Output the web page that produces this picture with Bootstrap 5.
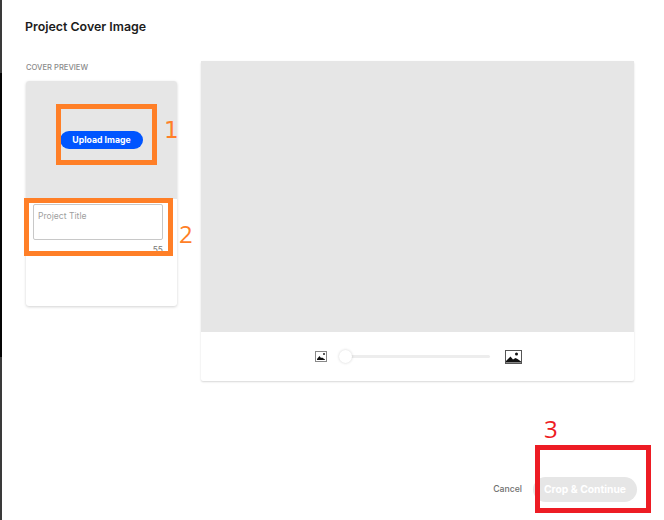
<!DOCTYPE html>
<html><head><meta charset="utf-8">
<link href="https://cdn.jsdelivr.net/npm/bootstrap@5.3.0/dist/css/bootstrap.min.css" rel="stylesheet">
<style>
html,body{height:100%;}
body{font-family:Inter,Roboto,"Liberation Sans",sans-serif;background:#fff;overflow:hidden;}
.stage{position:relative;width:664px;height:520px;}
.edge-strip{width:2px;height:520px;flex:none;background:linear-gradient(#3a3a3a 0,#3a3a3a 73px,#050505 73px,#050505 357px,#3a3a3a 357px,#3a3a3a 100%);}
.dialog-body{padding:19px 30px 0 24px;flex:1;min-width:0;height:520px;display:flex;flex-direction:column;}
.dlg-title{font-size:12.4px;font-weight:600;color:#1c1c1c;line-height:16px;margin:0 0 0 -1px;}
.main-row{margin-top:26px;gap:24px;}
.left-col{width:151px;flex:none;}
.cover-label{font-size:7.6px;font-weight:500;color:#8a8a8a;line-height:10px;margin:2px 0 8px 0;}
.cover-card{height:225px;border-radius:3px;box-shadow:0 1px 3px rgba(0,0,0,.18);background:#fff;overflow:hidden;}
.cover-top{height:118px;background:#e6e6e6;padding-top:50px;}
.upload-pill{display:block;margin:0 auto;background:#0055ff;color:#fff;font-size:8.7px;font-weight:700;border:0;border-radius:9px;height:18px;width:83px;padding:0;line-height:18px;}
.title-area{padding:5px 14px 0 7px;}
.title-box{height:36px;border:1px solid #c8c8c8;border-radius:2px;padding:6px 4px;font-size:8.6px;color:#a0a0a0;line-height:11px;}
.counter{font-size:8.5px;color:#777;text-align:right;line-height:10px;margin-top:5px;}
.crop-panel{width:433px;height:320px;border-radius:2px;box-shadow:0 1px 2px rgba(0,0,0,.16);background:#fff;align-self:flex-start;}
.crop-area{height:271px;background:#e6e6e6;}
.zoom-bar{height:49px;padding-left:2px;}
.track{width:150px;height:3px;background:#ededed;border-radius:2px;position:relative;margin:0 15px 0 13px;}
.thumb{position:absolute;left:-1px;top:-5px;width:13px;height:13px;border-radius:50%;background:#fff;box-shadow:0 0 3px rgba(0,0,0,.18);}
.footer-row{margin-top:auto;padding-bottom:18px;gap:11px;margin-right:-3px;}
.cancel-link{font-size:8.7px;font-weight:500;color:#6f6f6f;}
.crop-btn{background:#e6e6e6;color:#fff;font-size:10.3px;font-weight:700;border:0;border-radius:13px;height:25px;width:104px;padding:0;}
.mark-box{position:absolute;border-style:solid;pointer-events:none;}
.mark-one{left:56px;top:104px;width:101px;height:61px;border-width:5px;border-color:#ff7f27;}
.mark-two{left:24px;top:198px;width:149px;height:58px;border-width:5px;border-color:#ff7f27;}
.mark-three{left:535px;top:445px;width:116px;height:68px;border-width:5px;border-color:#ed1c24;}
.mark-num{position:absolute;font-family:"Open Sans",sans-serif;font-size:24px;line-height:26px;}
.num-one{left:164px;top:117px;color:#ff7f27;font-family:"DejaVu Sans",sans-serif;font-size:23px;}
.num-two{left:179px;top:221px;color:#ff7f27;}
.num-three{left:544px;top:416px;color:#ed1c24;}
</style></head>
<body>
<div class="stage d-flex">
  <div class="edge-strip"></div>
  <div class="dialog-body">
    <h1 class="dlg-title">Project Cover Image</h1>
    <div class="main-row d-flex">
      <div class="left-col">
        <p class="cover-label">COVER PREVIEW</p>
        <div class="cover-card">
          <div class="cover-top"><button class="upload-pill" type="button">Upload Image</button></div>
          <div class="title-area">
            <div class="title-box">Project Title</div>
            <div class="counter">55</div>
          </div>
        </div>
      </div>
      <div class="crop-panel">
        <div class="crop-area"></div>
        <div class="zoom-bar d-flex align-items-center justify-content-center">
          <svg width="12" height="11" viewBox="0 0 12 11"><rect x=".5" y=".5" width="11" height="10" fill="#fff" stroke="#888"/><path d="M2 9V8L4.5 5 6 7 7 6.5 10 8.5V9Z" fill="#111"/><circle cx="9" cy="3" r="1" fill="#222"/></svg>
          <div class="track"><div class="thumb"></div></div>
          <svg width="17" height="14" viewBox="0 0 17 14"><rect x=".5" y=".5" width="16" height="13" fill="#fff" stroke="#555"/><path d="M1 12.5V11L5.500 6.500 8 9.500 10.500 8 12.500 9 16 11.500V12.500Z" fill="#111"/><circle cx="11.500" cy="4" r="1.500" fill="#111"/></svg>
        </div>
      </div>
    </div>
    <div class="footer-row d-flex align-items-center justify-content-end">
      <span class="cancel-link">Cancel</span>
      <button class="crop-btn" type="button">Crop &amp; Continue</button>
    </div>
  </div>
  <div class="mark-box mark-one"></div>
  <div class="mark-box mark-two"></div>
  <div class="mark-box mark-three"></div>
  <span class="mark-num num-one">1</span>
  <span class="mark-num num-two">2</span>
  <span class="mark-num num-three">3</span>
</div>
</body></html>
